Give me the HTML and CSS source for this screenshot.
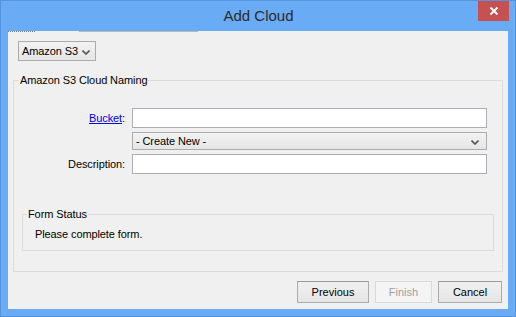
FILE: index.html
```html
<!DOCTYPE html>
<html>
<head>
  <title>Add Cloud</title>
  <link rel="stylesheet" href="styles.css">
</head>
<body>
  <div class="window">
    <div class="titlebar">
      <span></span>
      <span class="title">Add Cloud</span>
      <button class="close-btn" type="button">
        <svg width="10" height="8" viewBox="0 0 10 8">
          <path d="M1.5 0.5 L8.5 7.5 M8.5 0.5 L1.5 7.5" stroke="#fff" stroke-width="2" fill="none"/>
        </svg>
      </button>
    </div>

    <div class="client">
      <div class="clip-strip">
        <span class="clip-dark"></span>
        <span class="clip-light"></span>
      </div>

      <div class="combo combo-type">
        <span>Amazon S3</span>
        <svg width="8" height="5" viewBox="0 0 8 5">
          <path d="M0.5 0.5 L4 4 L7.5 0.5" stroke="#555" stroke-width="1.6" fill="none"/>
        </svg>
      </div>

      <fieldset class="group naming">
        <legend>Amazon S3 Cloud Naming</legend>

        <div class="form-grid">
          <label class="field-label"><a href="#" class="link">Bucket</a>:</label>
          <input type="text" class="text-input">

          <span></span>
          <div class="combo combo-wide">
            <span>- Create New -</span>
            <svg width="8" height="5" viewBox="0 0 8 5">
              <path d="M0.5 0.5 L4 4 L7.5 0.5" stroke="#555" stroke-width="1.6" fill="none"/>
            </svg>
          </div>

          <label class="field-label">Description:</label>
          <input type="text" class="text-input">
        </div>

        <fieldset class="group status">
          <legend>Form Status</legend>
          <p class="status-text">Please complete form.</p>
        </fieldset>
      </fieldset>

      <div class="buttons">
        <button class="button btn-prev" type="button">Previous</button>
        <button class="button btn-finish" type="button" disabled>Finish</button>
        <button class="button btn-cancel" type="button">Cancel</button>
      </div>
    </div>
  </div>
</body>
</html>
```

FILE: styles.css
```css
* {
  box-sizing: border-box;
}

body {
  margin: 0;
  font-family: 'Liberation Sans', Arial, sans-serif;
  font-size: 11px;
  letter-spacing: -0.1px;
  color: #000;
}

.window {
  width: 516px;
  height: 317px;
  background: #6aabf5;
  border: 1px solid #5593dc;
  padding: 0 7px 7px 7px;
  display: flex;
  flex-direction: column;
}

.titlebar {
  height: 30px;
  display: grid;
  grid-template-columns: 1fr auto 1fr;
  align-items: start;
}

.title {
  font-size: 15px;
  line-height: 30px;
  letter-spacing: 0;
  color: #2b2b2b;
  padding-left: 1px;
}

.close-btn {
  justify-self: end;
  width: 31px;
  height: 20px;
  margin-right: -1px;
  border: none;
  padding: 0;
  background: #c75050;
  display: flex;
  align-items: center;
  justify-content: center;
}

.client {
  flex: 1;
  background: #f0f0f0;
  display: flex;
  flex-direction: column;
  align-items: flex-start;
}

.clip-strip {
  height: 2px;
  width: 100%;
  display: flex;
}

.clip-dark {
  width: 27px;
  height: 1px;
  border-top: 1px dotted #777;
}

.clip-light {
  width: 119px;
  height: 1px;
  margin-left: 44px;
  background: #b9b9b9;
}

.combo {
  display: flex;
  align-items: center;
  justify-content: space-between;
  border: 1px solid #acacac;
  background: linear-gradient(#f2f2f2, #e6e6e6);
  padding: 0 5px 0 3px;
}

.combo-type {
  width: 78px;
  height: 20px;
  margin: 8px 0 0 10px;
}

.combo-type svg {
  margin-top: 2px;
}

.combo-wide {
  height: 18px;
}

.combo-wide svg {
  margin-top: 2px;
  margin-right: 2px;
}

.group {
  border: 1px solid #dcdcdc;
  margin: 0;
  padding: 0;
  min-width: 0;
}

.group legend {
  line-height: 14px;
  padding: 0 1px;
}

.naming {
  width: 490px;
  margin: 12px 0 0 5px;
  padding: 21px 0 20px 0;
}

.naming legend {
  margin-left: 5px;
}

.form-grid {
  display: grid;
  grid-template-columns: 111px 355px;
  grid-template-rows: 20px 18px 20px;
  column-gap: 7px;
  row-gap: 4px;
  align-items: center;
}

.field-label {
  text-align: right;
}

.link {
  color: #0000ee;
  text-decoration: underline;
}

.text-input {
  height: 20px;
  border: 1px solid #abadb3;
  background: #fff;
  margin: 0;
}

.status {
  width: 472px;
  margin: 33px 0 0 8px;
  padding: 6px 0 9px 0;
}

.status legend {
  margin-left: 4px;
}

.status-text {
  margin: 0;
  padding-left: 12px;
  line-height: 14px;
}

.buttons {
  align-self: stretch;
  display: flex;
  justify-content: flex-end;
  margin-top: 9px;
  padding-right: 6px;
}

.button {
  height: 22px;
  font-family: 'Liberation Sans', Arial, sans-serif;
  font-size: 11px;
  color: #000;
  border: 1px solid #acacac;
  border-top-color: #9a9a9a;
  background: linear-gradient(#f0f0f0, #e5e5e5);
  padding: 0;
}

.btn-prev {
  width: 72px;
}

.btn-finish {
  width: 57px;
  margin-left: 6px;
  color: #a0a0a0;
  border-color: #d9d9d9;
  background: #f4f4f4;
}

.btn-cancel {
  width: 64px;
  margin-left: 6px;
}
```
